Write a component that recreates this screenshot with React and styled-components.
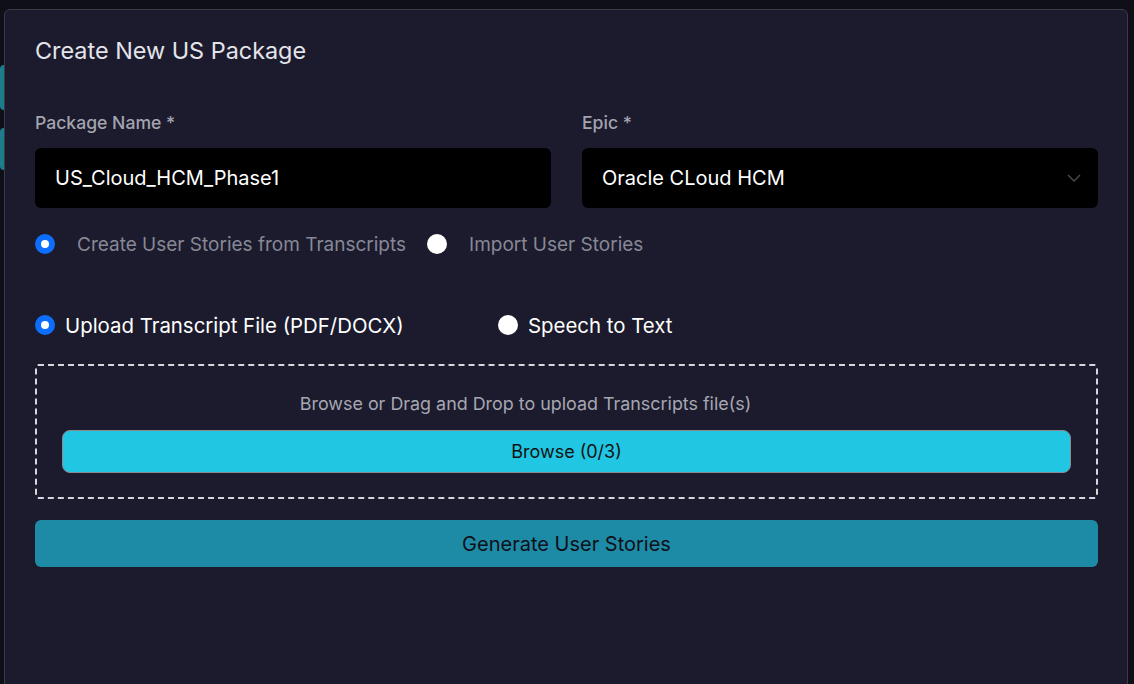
import styled, { createGlobalStyle } from "styled-components";

const GlobalStyle = createGlobalStyle`
  html, body {
    margin: 0;
    padding: 0;
    background: #0f0f17;
    font-family: Inter, "Noto Sans", "Liberation Sans", sans-serif;
    overflow: hidden;
  }
  * { box-sizing: border-box; }
`;

const ChevronDown = () => (
  <svg width="24" height="24" viewBox="0 0 24 24" fill="none" stroke="currentColor" strokeWidth="1.4">
    <polyline points="6 9 12 15 18 9" />
  </svg>
);

const App = () => {
  return (
    <>
      <GlobalStyle />
      <Page>
        <SideBlock $top={56} $h={45} />
        <SideBlock $top={18} $h={42} />
      </Page>

      <Overlay>
        <Modal>
          <Title>Create New US Package</Title>

          <FieldGrid>
            <Field>
              <Label>Package Name *</Label>
              <InputBox>US_Cloud_HCM_Phase1</InputBox>
            </Field>
            <Field>
              <Label>Epic *</Label>
              <SelectBox>
                <span>Oracle CLoud HCM</span>
                <Caret>
                  <ChevronDown />
                </Caret>
              </SelectBox>
            </Field>
          </FieldGrid>

          <ModeRow>
            <RadioOption $gap={22}>
              <Radio $checked />
              <ModeText>Create User Stories from Transcripts</ModeText>
            </RadioOption>
            <RadioOption $gap={22}>
              <Radio />
              <ModeText>Import User Stories</ModeText>
            </RadioOption>
          </ModeRow>

          <SourceRow>
            <RadioOption $gap={10} $width={463}>
              <Radio $checked />
              <SourceText>Upload Transcript File (PDF/DOCX)</SourceText>
            </RadioOption>
            <RadioOption $gap={10}>
              <Radio />
              <SourceText>Speech to Text</SourceText>
            </RadioOption>
          </SourceRow>

          <DropZone>
            <DropHint>Browse or Drag and Drop to upload Transcripts file(s)</DropHint>
            <BrowseButton>Browse (0/3)</BrowseButton>
          </DropZone>

          <GenerateButton>Generate User Stories</GenerateButton>
        </Modal>
      </Overlay>
    </>
  );
};

export default App;

// --- Styled Components ---

const Page = styled.div`
  width: 100vw;
  height: 100vh;
  display: flex;
  flex-direction: column;
  padding-top: 9px;
  background: #0f0f17;
`;

const SideBlock = styled.div`
  width: 60px;
  height: ${(p) => p.$h}px;
  margin-top: ${(p) => p.$top}px;
  background: #1d7d8c;
  border-radius: 4px;
`;

const Overlay = styled.div`
  position: fixed;
  inset: 0;
  padding: 9px 6px 0 4px;
`;

const Modal = styled.div`
  width: 100%;
  height: 700px;
  background: #1b1b2d;
  border: 1px solid #3a3b4c;
  border-radius: 6px;
  padding: 26px 29px 30px 30px;
  display: flex;
  flex-direction: column;
`;

const Title = styled.h2`
  margin: 0;
  font-size: 23.4px;
  font-weight: 400;
  color: #e4e4ea;
  line-height: 30px;
`;

const FieldGrid = styled.div`
  display: grid;
  grid-template-columns: 1fr 1fr;
  column-gap: 31px;
  margin-top: 46px;
`;

const Field = styled.div`
  display: flex;
  flex-direction: column;
`;

const Label = styled.label`
  font-size: 17.6px;
  font-weight: 500;
  color: #a3a4ae;
  line-height: 22px;
  margin-bottom: 14px;
`;

const InputBox = styled.div`
  height: 60px;
  background: #000;
  border-radius: 6px;
  padding: 0 20px;
  display: flex;
  align-items: center;
  color: #fff;
  font-size: 20px;
`;

const SelectBox = styled(InputBox)`
  justify-content: space-between;
  padding-right: 12px;
`;

const Caret = styled.span`
  display: flex;
  color: #4a4a54;
`;

const ModeRow = styled.div`
  display: flex;
  align-items: center;
  gap: 21px;
  margin-top: 24px;
  height: 24px;
`;

const SourceRow = styled.div`
  display: flex;
  align-items: center;
  margin-top: 57px;
  height: 24px;
`;

const RadioOption = styled.label`
  display: flex;
  align-items: center;
  gap: ${(p) => p.$gap}px;
  width: ${(p) => (p.$width ? `${p.$width}px` : "auto")};
`;

const Radio = styled.span`
  width: 20px;
  height: 20px;
  border-radius: 50%;
  flex-shrink: 0;
  background: #fff;
  border: ${(p) => (p.$checked ? "6px solid #0d6efd" : "none")};
`;

const ModeText = styled.span`
  font-size: 19px;
  color: #878896;
`;

const SourceText = styled.span`
  font-size: 20.4px;
  color: #fff;
`;

const DropZone = styled.div`
  margin-top: 27px;
  border: 2px dashed #d6d6dc;
  border-radius: 3px;
  padding: 27px 25px 24px 25px;
  display: flex;
  flex-direction: column;
  align-items: center;
  gap: 15px;
`;

const DropHint = styled.div`
  font-size: 17.9px;
  color: #a6a7b2;
  line-height: 22px;
  margin-right: 82px;
`;

const BrowseButton = styled.button`
  width: 100%;
  height: 43px;
  background: #21c6e3;
  border: 1px solid #8a8a90;
  border-radius: 8px;
  font-family: inherit;
  font-size: 18px;
  color: #111;
`;

const GenerateButton = styled.button`
  margin-top: 21px;
  height: 47px;
  width: 100%;
  background: #1e8ba6;
  border: none;
  border-radius: 6px;
  font-family: inherit;
  font-size: 20px;
  color: #0e0f18;
`;
